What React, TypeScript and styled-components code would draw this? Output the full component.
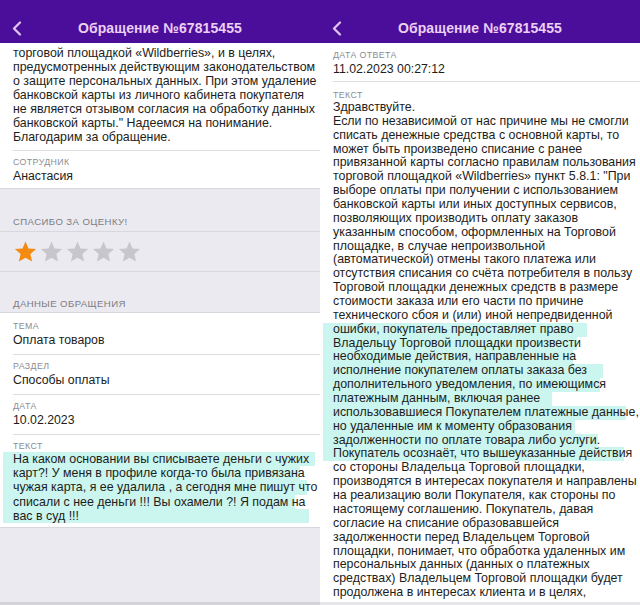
import styled, { createGlobalStyle } from 'styled-components'

const GlobalStyle = createGlobalStyle`
  html, body {
    margin: 0;
    padding: 0;
    background: #ebeaf0;
  }
  * { box-sizing: border-box; }
`

const PURPLE = '#4b0e9a'
const MARK = '#cbf5ef'
const LABEL = '#8c8c92'
const INK = '#1d1d20'

const Screen = styled.div`
  display: grid;
  grid-template-columns: 320px 320px;
  width: 640px;
  height: 605px;
  overflow: hidden;
  font-family: "Liberation Sans", Arial, sans-serif;
  color: ${INK};
`

const Panel = styled.div<{ $bg: string }>`
  display: flex;
  flex-direction: column;
  height: 605px;
  overflow: hidden;
  background: ${p => p.$bg};
`

const Header = styled.div`
  flex: none;
  height: 43px;
  background: ${PURPLE};
  display: grid;
  grid-template-columns: 40px 1fr 40px;
  align-items: end;
  padding-bottom: 1px;
`

const Back = styled.div`
  height: 28px;
  display: flex;
  align-items: center;
  padding-left: 12px;
`

const Title = styled.div`
  text-align: center;
  line-height: 28px;
  font-size: 14px;
  font-weight: 700;
  color: #ecd0f4;
  letter-spacing: 0.1px;
`

const Body = styled.div`
  flex: 1;
  overflow: hidden;
  display: flex;
  flex-direction: column;
`

const WhiteBlock = styled.div<{ $pt?: number; $pb?: number; $bottom?: boolean }>`
  background: #fff;
  padding: ${p => p.$pt ?? 0}px 0 ${p => p.$pb ?? 0}px 13px;
  border-bottom: ${p => (p.$bottom ? '1px solid #d8d7de' : 'none')};
`

const Paragraph = styled.div<{ $lh: number }>`
  font-size: 12.4px;
  line-height: ${p => p.$lh}px;
  white-space: nowrap;
`

const Line = styled.div`
  display: block;
`

const MarkLine = styled.div<{ $w: number }>`
  display: block;
  margin-left: -10px;
  padding-left: 10px;
  width: ${p => p.$w}px;
  background: ${MARK};
`

const Field = styled.div<{ $pt: number; $pb: number; $last?: boolean }>`
  padding: ${p => p.$pt}px 0 ${p => p.$pb}px;
  border-bottom: ${p => (p.$last ? 'none' : '1px solid #dcdbe0')};
`

const Label = styled.div`
  font-size: 8.8px;
  line-height: 12px;
  letter-spacing: 0.4px;
  text-transform: uppercase;
  color: ${LABEL};
`

const Value = styled.div`
  font-size: 12.3px;
  line-height: 16px;
  color: ${INK};
`

const GroupTitle = styled.div<{ $pt: number; $pb: number }>`
  padding: ${p => p.$pt}px 0 ${p => p.$pb}px 13px;
  font-size: 9.6px;
  line-height: 13px;
  letter-spacing: 0.4px;
  color: #7d7d83;
  text-transform: uppercase;
  border-bottom: 1px solid #d8d7de;
`

const Stars = styled.div`
  height: 40px;
  display: flex;
  align-items: center;
  gap: 1px;
  padding-left: 13px;
  border-bottom: 1px solid #d8d7de;
`

const Filler = styled.div`
  flex: 1;
`

const BottomBar = styled.div<{ $c: string }>`
  flex: none;
  height: 3px;
  background: ${p => p.$c};
`

const Chevron = () => (
  <svg width="10" height="15" viewBox="0 0 10 15">
    <path d="M8 1.5 L2 7.5 L8 13.5" fill="none" stroke="#e3c4f0" strokeWidth="2.2" strokeLinecap="round" strokeLinejoin="round" />
  </svg>
)

const Star = ({ on }: { on: boolean }) => (
  <svg width="25" height="24" viewBox="0 0 24 24">
    <polygon
      points="12,1.6 15,8.4 22.6,9.1 16.9,14.1 18.6,21.6 12,17.7 5.4,21.6 7.1,14.1 1.4,9.1 9,8.4"
      fill={on ? '#f58a12' : '#c6c6cc'}
    />
  </svg>
)

const TopBar = () => (
  <Header>
    <Back><Chevron /></Back>
    <Title>Обращение №67815455</Title>
    <div />
  </Header>
)

type TextLine = { t: string; w?: number }

const Lines = ({ lines, lh }: { lines: TextLine[]; lh: number }) => (
  <Paragraph $lh={lh}>
    {lines.map((l, i) =>
      l.w ? <MarkLine key={i} $w={l.w}>{l.t}</MarkLine> : <Line key={i}>{l.t}</Line>
    )}
  </Paragraph>
)

const answerTail: TextLine[] = [
  { t: 'торговой площадкой «Wildberries», и в целях,' },
  { t: 'предусмотренных действующим законодательством' },
  { t: 'о защите персональных данных. При этом удаление' },
  { t: 'банковской карты из личного кабинета покупателя' },
  { t: 'не является отзывом согласия на обработку данных' },
  { t: 'банковской карты." Надеемся на понимание.' },
  { t: 'Благодарим за обращение.' },
]

const question: TextLine[] = [
  { t: 'На каком основании вы списываете деньги с чужих', w: 312 },
  { t: 'карт?! У меня в профиле когда-то была привязана', w: 297 },
  { t: 'чужая карта, я ее удалила , а сегодня мне пишут что', w: 304 },
  { t: 'списали с нее деньги !!! Вы охамели ?! Я подам на', w: 292 },
  { t: 'вас в суд !!!', w: 306 },
]

const answer: TextLine[] = [
  { t: 'Здравствуйте.' },
  { t: 'Если по независимой от нас причине мы не смогли' },
  { t: 'списать денежные средства с основной карты, то' },
  { t: 'может быть произведено списание с ранее' },
  { t: 'привязанной карты согласно правилам пользования' },
  { t: 'торговой площадкой «Wildberries» пункт 5.8.1: "При' },
  { t: 'выборе оплаты при получении с использованием' },
  { t: 'банковской карты или иных доступных сервисов,' },
  { t: 'позволяющих производить оплату заказов' },
  { t: 'указанным способом, оформленных на Торговой' },
  { t: 'площадке, в случае непроизвольной' },
  { t: '(автоматической) отмены такого платежа или' },
  { t: 'отсутствия списания со счёта потребителя в пользу' },
  { t: 'Торговой площадки денежных средств в размере' },
  { t: 'стоимости заказа или его части по причине' },
  { t: 'технического сбоя и (или) иной непредвиденной' },
  { t: 'ошибки, покупатель предоставляет право', w: 264 },
  { t: 'Владельцу Торговой площадки произвести', w: 254 },
  { t: 'необходимые действия, направленные на', w: 250 },
  { t: 'исполнение покупателем оплаты заказа без', w: 280 },
  { t: 'дополнительного уведомления, по имеющимся', w: 277 },
  { t: 'платежным данным, включая ранее', w: 229 },
  { t: 'использовавшиеся Покупателем платежные данные,', w: 303 },
  { t: 'но удаленные им к моменту образования', w: 252 },
  { t: 'задолженности по оплате товара либо услуги.', w: 275 },
  { t: 'Покупатель осознаёт, что вышеуказанные действия', w: 301 },
  { t: 'со стороны Владельца Торговой площадки,' },
  { t: 'производятся в интересах покупателя и направлены' },
  { t: 'на реализацию воли Покупателя, как стороны по' },
  { t: 'настоящему соглашению. Покупатель, давая' },
  { t: 'согласие на списание образовавшейся' },
  { t: 'задолженности перед Владельцем Торговой' },
  { t: 'площадки, понимает, что обработка удаленных им' },
  { t: 'персональных данных (данных о платежных' },
  { t: 'средствах) Владельцем Торговой площадки будет' },
  { t: 'продолжена в интересах клиента и в целях,' },
]

const rating = 1

export default function App() {
  return (
    <>
      <GlobalStyle />
      <Screen>
        <Panel $bg="#ebeaf0">
          <TopBar />
          <Body>
            <WhiteBlock $pt={3} $bottom>
              <Field $pt={0} $pb={6}>
                <Lines lines={answerTail} lh={14} />
              </Field>
              <Field $pt={5} $pb={4} $last>
                <Label>Сотрудник</Label>
                <Value>Анастасия</Value>
              </Field>
            </WhiteBlock>
            <GroupTitle $pt={26} $pb={3}>Спасибо за оценку!</GroupTitle>
            <Stars>
              {[1, 2, 3, 4, 5].map(n => <Star key={n} on={n <= rating} />)}
            </Stars>
            <GroupTitle $pt={25} $pb={2}>Данные обращения</GroupTitle>
            <WhiteBlock $pt={0} $pb={4} $bottom>
              <Field $pt={7} $pb={6}>
                <Label>Тема</Label>
                <Value>Оплата товаров</Value>
              </Field>
              <Field $pt={5} $pb={6}>
                <Label>Раздел</Label>
                <Value>Способы оплаты</Value>
              </Field>
              <Field $pt={5} $pb={6}>
                <Label>Дата</Label>
                <Value>10.02.2023</Value>
              </Field>
              <Field $pt={5} $pb={0} $last>
                <Label>Текст</Label>
                <Lines lines={question} lh={14.2} />
              </Field>
            </WhiteBlock>
            <Filler />
          </Body>
          <BottomBar $c="#d3d2d8" />
        </Panel>

        <Panel $bg="#ffffff">
          <TopBar />
          <Body>
            <WhiteBlock>
              <Field $pt={6} $pb={4}>
                <Label>Дата ответа</Label>
                <Value>11.02.2023 00:27:12</Value>
              </Field>
              <Field $pt={7} $pb={0} $last>
                <Label>Текст</Label>
                <Lines lines={answer} lh={13.86} />
              </Field>
            </WhiteBlock>
          </Body>
          <BottomBar $c="#e6e5ea" />
        </Panel>
      </Screen>
    </>
  )
}
